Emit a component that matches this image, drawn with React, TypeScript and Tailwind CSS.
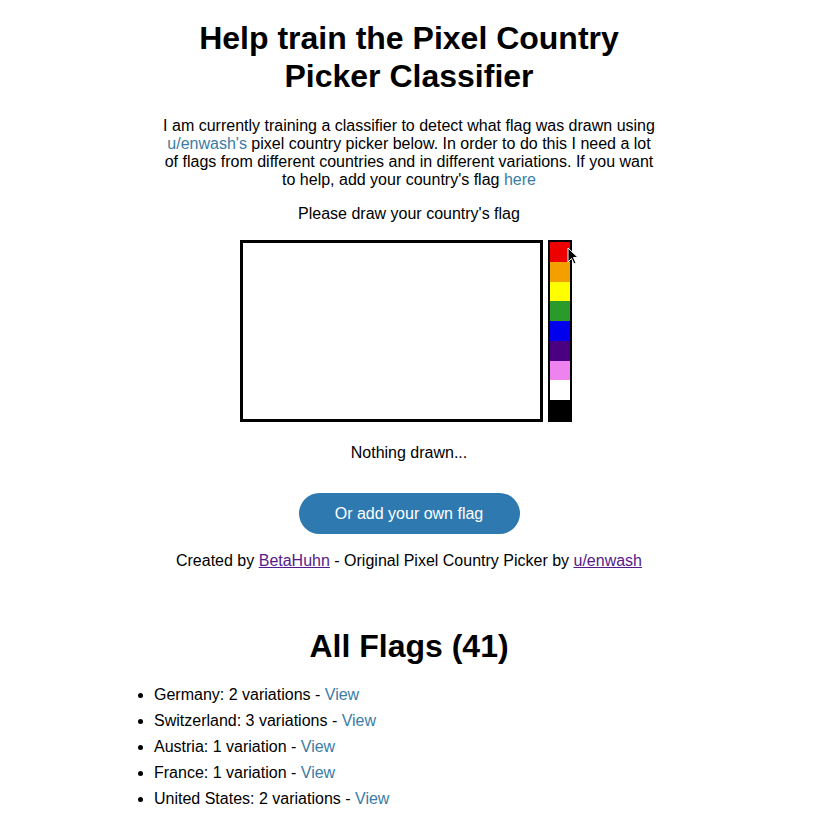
import React from 'react'

const COLORS = ['#ee0000', '#f2a000', '#ffff00', '#2a9a2a', '#0000ee', '#4b0082', '#ee82ee', '#ffffff', '#000000']

const FLAGS = [
  { name: 'Germany', count: 2 },
  { name: 'Switzerland', count: 3 },
  { name: 'Austria', count: 1 },
  { name: 'France', count: 1 },
  { name: 'United States', count: 2 },
]

export default function App() {
  return (
    <div className="min-h-[818px] bg-white text-black text-[16px] font-['Liberation_Sans',Arial,sans-serif]">
      <div className="mx-auto w-[500px] flex flex-col items-center pt-[19px]">
        {/* Header */}
        <h1 className="text-[32px] leading-[38px] font-bold text-center w-[440px]">
          Help train the Pixel Country Picker Classifier
        </h1>
        <p className="mt-[22px] leading-[18px] text-center">
          I am currently training a classifier to detect what flag was drawn using{' '}
          <a className="text-[#3a7ca5]">u/enwash's</a> pixel country picker below. In order to do this I need a lot
          of flags from different countries and in different variations. If you want to help, add your country's flag{' '}
          <a className="text-[#3a7ca5]">here</a>
        </p>
        <p className="mt-[16px] leading-[18px]">Please draw your country's flag</p>

        {/* Canvas + palette */}
        <div className="mt-[17px] flex gap-[5px] ml-[-6px]">
          <div className="w-[303px] h-[182px] border-[3px] border-black bg-white" />
          <div className="relative w-[24px] h-[182px] border-2 border-black flex flex-col">
            {COLORS.map((c) => (
              <div key={c} className="flex-1" style={{ backgroundColor: c }} />
            ))}
            <svg className="absolute left-[17px] top-[5px]" width="12" height="19" viewBox="0 0 12 19">
              <path d="M1 1 L1 15 L4.5 11.5 L7 17 L9 16 L6.5 10.5 L11 10.5 Z" fill="#000" stroke="#fff" strokeWidth="1" />
            </svg>
          </div>
        </div>

        <p className="mt-[22px] leading-[18px]">Nothing drawn...</p>

        <button className="mt-[31px] w-[221px] h-[41px] rounded-full bg-[#2e79b0] text-white">
          Or add your own flag
        </button>

        <p className="mt-[18px] leading-[18px] whitespace-nowrap">
          Created by <a className="text-[#551a8b] underline">BetaHuhn</a> - Original Pixel Country Picker by{' '}
          <a className="text-[#551a8b] underline">u/enwash</a>
        </p>

        <h2 className="mt-[57px] text-[32px] leading-[38px] font-bold">All Flags (41)</h2>
      </div>

      {/* Flag list */}
      <ul className="mt-[17px] ml-[134px] list-disc pl-[20px]">
        {FLAGS.map((f) => (
          <li key={f.name} className="leading-[26px]">
            {f.name}: {f.count} {f.count === 1 ? 'variation' : 'variations'} - <a className="text-[#3a7ca5]">View</a>
          </li>
        ))}
      </ul>
    </div>
  )
}
